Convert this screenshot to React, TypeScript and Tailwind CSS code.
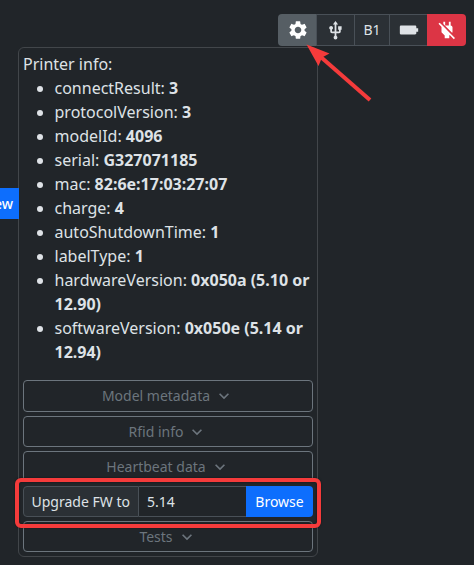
import { MdBatteryFull, MdExpandMore, MdPowerOff, MdSettings, MdUsb } from "react-icons/md";

const info: [string, string][] = [
  ["connectResult", "3"],
  ["protocolVersion", "3"],
  ["modelId", "4096"],
  ["serial", "G327071185"],
  ["mac", "82:6e:17:03:27:07"],
  ["charge", "4"],
  ["autoShutdownTime", "1"],
  ["labelType", "1"],
  ["hardwareVersion", "0x050a (5.10 or 12.90)"],
  ["softwareVersion", "0x050e (5.14 or 12.94)"],
];

function Collapse({ label, tall }: { label: string; tall?: boolean }) {
  return (
    <button
      className={`flex w-full items-center justify-center rounded border border-[#6c757d] text-sm text-[#6c757d] ${tall ? "h-8" : "h-[31px]"}`}
    >
      {label}
      <MdExpandMore className="ml-1 h-5 w-5" />
    </button>
  );
}

export default function App() {
  return (
    <div className="relative h-[565px] w-[474px] overflow-hidden bg-[#212529] font-['Noto_Sans',sans-serif] text-base text-[#dee2e6]">
      <div className="flex justify-end pt-3.5 pr-2">
        <div className="flex h-8 w-[188px] overflow-hidden rounded text-sm">
          <button className="flex w-[39px] items-center justify-center border-r border-[#495057] bg-[#565e64] pl-px text-white">
            <MdSettings className="h-[22px] w-[22px]" />
          </button>
          <span className="flex w-[38px] items-center justify-center border-y border-r border-[#495057] bg-[#2b3035]">
            <MdUsb className="h-[21px] w-[21px]" />
          </span>
          <span className="flex w-[35px] items-center justify-center border-y border-r border-[#495057] bg-[#2b3035]">
            B1
          </span>
          <span className="flex w-[37px] items-center justify-center border-y border-[#495057] bg-[#2b3035]">
            <MdBatteryFull className="h-[22px] w-[22px] rotate-90" />
          </span>
          <button className="flex w-[39px] items-center justify-center bg-[#dc3545] text-white">
            <MdPowerOff className="h-[22px] w-[22px]" />
          </button>
        </div>
      </div>

      <div className="mt-px ml-[18px] h-[510px] w-[300px] rounded-md border border-[#42464a] bg-[#212529] p-1">
        <div className="leading-6">Printer info:</div>
        <ul className="mb-4 list-disc pl-[31.5px] leading-6">
          {info.map(([key, value]) => (
            <li key={key}>
              {key}: <b className="font-bold">{value}</b>
            </li>
          ))}
        </ul>
        <div className="flex flex-col gap-1">
          <Collapse label="Model metadata" tall />
          <Collapse label="Rfid info" />
          <Collapse label="Heartbeat data" />
          <div className="flex h-[31px] text-sm">
            <span className="flex w-[116px] items-center rounded-l border border-[#495057] bg-[#2b3035] pl-[7.5px]">
              Upgrade FW to
            </span>
            <input
              className="min-w-0 flex-1 border-y border-[#495057] bg-[#212529] px-2 outline-none"
              defaultValue="5.14"
            />
            <button className="w-[67px] rounded-r bg-[#0d6efd] text-white">Browse</button>
          </div>
          <Collapse label="Tests" />
        </div>
      </div>

      <div className="absolute top-[188px] left-0 flex h-[31px] w-[19px] items-center justify-end overflow-hidden bg-[#0d6efd] pr-1.5 text-sm font-medium text-white">
        <span>Preview</span>
      </div>

      <div className="absolute top-[478px] left-[15px] h-[50px] w-[306px] rounded-md border-4 border-[#f53b3b] shadow-[0_0_2px_#0008,inset_0_0_2px_#0008]" />

      <svg className="absolute top-[40px] left-[300px]" width="80" height="70" viewBox="300 40 80 70">
        <path d="M318 54.5 L370 100" stroke="#f53b3b" strokeWidth="4" />
        <path d="M306.5 44.5 L329.5 53.5 L322 57.5 L318.5 66 Z" fill="#f53b3b" />
      </svg>
    </div>
  );
}
